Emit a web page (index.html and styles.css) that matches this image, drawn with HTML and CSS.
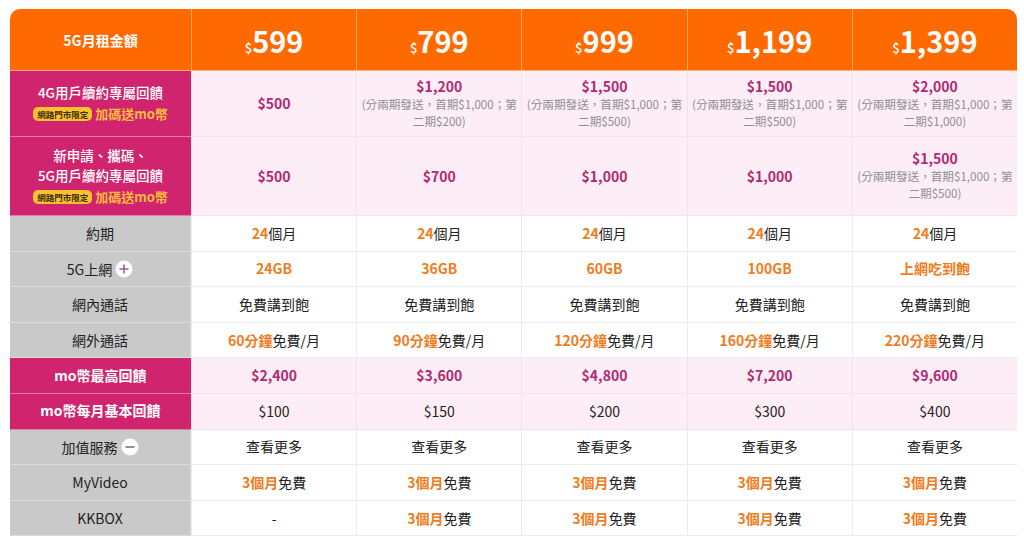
FILE: index.html
```html
<!DOCTYPE html>
<html lang="zh-Hant">
<head>
<meta charset="utf-8">
<link rel="stylesheet" href="styles.css">
</head>
<body>
<div class="table">
  <div class="row head">
    <div class="lab">5G月租金額</div>
    <div class="cell"><span class="cur">$</span>599</div>
    <div class="cell"><span class="cur">$</span>799</div>
    <div class="cell"><span class="cur">$</span>999</div>
    <div class="cell"><span class="cur">$</span>1,199</div>
    <div class="cell"><span class="cur">$</span>1,399</div>
  </div>
  <div class="row r1 pink">
    <div class="lab mag">
      <div>4G用戶續約專屬回饋</div>
      <div class="promo"><span class="badge">網路門市限定</span><span class="extra">加碼送mo幣</span></div>
    </div>
    <div class="cell"><b class="amt">$500</b></div>
    <div class="cell"><b class="amt">$1,200</b><span class="note">(分兩期發送，首期$1,000；第二期$200)</span></div>
    <div class="cell"><b class="amt">$1,500</b><span class="note">(分兩期發送，首期$1,000；第二期$500)</span></div>
    <div class="cell"><b class="amt">$1,500</b><span class="note">(分兩期發送，首期$1,000；第二期$500)</span></div>
    <div class="cell"><b class="amt">$2,000</b><span class="note">(分兩期發送，首期$1,000；第二期$1,000)</span></div>
  </div>
  <div class="row r2 pink">
    <div class="lab mag">
      <div>新申請、攜碼、</div>
      <div>5G用戶續約專屬回饋</div>
      <div class="promo"><span class="badge">網路門市限定</span><span class="extra">加碼送mo幣</span></div>
    </div>
    <div class="cell"><b class="amt">$500</b></div>
    <div class="cell"><b class="amt">$700</b></div>
    <div class="cell"><b class="amt">$1,000</b></div>
    <div class="cell"><b class="amt">$1,000</b></div>
    <div class="cell"><b class="amt">$1,500</b><span class="note">(分兩期發送，首期$1,000；第二期$500)</span></div>
  </div>
  <div class="row std">
    <div class="lab gray">約期</div>
    <div class="cell"><span><b class="or">24</b>個月</span></div>
    <div class="cell"><span><b class="or">24</b>個月</span></div>
    <div class="cell"><span><b class="or">24</b>個月</span></div>
    <div class="cell"><span><b class="or">24</b>個月</span></div>
    <div class="cell"><span><b class="or">24</b>個月</span></div>
  </div>
  <div class="row std">
    <div class="lab gray"><span class="inl">5G上網<span class="ico"><svg width="18" height="18" viewBox="0 0 18 18"><circle cx="9" cy="9" r="8.5" fill="#fff"/><path d="M9 4.5v9M4.5 9h9" stroke="#b0559a" stroke-width="1.6"/></svg></span></span></div>
    <div class="cell"><b class="or">24GB</b></div>
    <div class="cell"><b class="or">36GB</b></div>
    <div class="cell"><b class="or">60GB</b></div>
    <div class="cell"><b class="or">100GB</b></div>
    <div class="cell"><b class="or">上網吃到飽</b></div>
  </div>
  <div class="row std">
    <div class="lab gray">網內通話</div>
    <div class="cell">免費講到飽</div>
    <div class="cell">免費講到飽</div>
    <div class="cell">免費講到飽</div>
    <div class="cell">免費講到飽</div>
    <div class="cell">免費講到飽</div>
  </div>
  <div class="row std">
    <div class="lab gray">網外通話</div>
    <div class="cell"><span><b class="or">60分鐘</b>免費/月</span></div>
    <div class="cell"><span><b class="or">90分鐘</b>免費/月</span></div>
    <div class="cell"><span><b class="or">120分鐘</b>免費/月</span></div>
    <div class="cell"><span><b class="or">160分鐘</b>免費/月</span></div>
    <div class="cell"><span><b class="or">220分鐘</b>免費/月</span></div>
  </div>
  <div class="row std pink">
    <div class="lab mag">mo幣最高回饋</div>
    <div class="cell"><b class="amt">$2,400</b></div>
    <div class="cell"><b class="amt">$3,600</b></div>
    <div class="cell"><b class="amt">$4,800</b></div>
    <div class="cell"><b class="amt">$7,200</b></div>
    <div class="cell"><b class="amt">$9,600</b></div>
  </div>
  <div class="row std pink">
    <div class="lab mag">mo幣每月基本回饋</div>
    <div class="cell">$100</div>
    <div class="cell">$150</div>
    <div class="cell">$200</div>
    <div class="cell">$300</div>
    <div class="cell">$400</div>
  </div>
  <div class="row std">
    <div class="lab gray"><span class="inl">加值服務<span class="ico"><svg width="18" height="18" viewBox="0 0 18 18"><circle cx="9" cy="9" r="8.5" fill="#fff"/><path d="M4.5 9h9" stroke="#8a8a8a" stroke-width="1.8"/></svg></span></span></div>
    <div class="cell">查看更多</div>
    <div class="cell">查看更多</div>
    <div class="cell">查看更多</div>
    <div class="cell">查看更多</div>
    <div class="cell">查看更多</div>
  </div>
  <div class="row std">
    <div class="lab gray">MyVideo</div>
    <div class="cell"><span><b class="or">3個月</b>免費</span></div>
    <div class="cell"><span><b class="or">3個月</b>免費</span></div>
    <div class="cell"><span><b class="or">3個月</b>免費</span></div>
    <div class="cell"><span><b class="or">3個月</b>免費</span></div>
    <div class="cell"><span><b class="or">3個月</b>免費</span></div>
  </div>
  <div class="row std">
    <div class="lab gray">KKBOX</div>
    <div class="cell">-</div>
    <div class="cell"><span><b class="or">3個月</b>免費</span></div>
    <div class="cell"><span><b class="or">3個月</b>免費</span></div>
    <div class="cell"><span><b class="or">3個月</b>免費</span></div>
    <div class="cell"><span><b class="or">3個月</b>免費</span></div>
  </div>
</div>
</body>
</html>
```
FILE: styles.css
```css
html, body {
  margin: 0;
  background: #fff;
}
body {
  padding: 9px 7px 0 10px;
  font-family: "Noto Sans CJK TC", "Noto Sans", sans-serif;
  color: #222;
  font-size: 14px;
}
.table {
  width: 1007px;
  border-radius: 10px 10px 0 0;
  overflow: hidden;
}
.row {
  display: grid;
  grid-template-columns: 181px repeat(5, 1fr);
}
.row > div {
  display: flex;
  flex-direction: column;
  align-items: center;
  justify-content: center;
  text-align: center;
  box-sizing: border-box;
}
.cell {
  border-left: 1px solid #ececec;
  border-bottom: 1px solid #ececec;
  line-height: 1.35;
}
.head {
  height: 62px;
  background: #ff6a00;
  color: #fff;
}
.head .lab {
  font-weight: 700;
  font-size: 14px;
  border-bottom: 1px solid #ffb27a;
}
.head .cell {
  flex-direction: row;
  align-items: baseline;
  justify-content: center;
  font-size: 29px;
  font-weight: 700;
  border-left: 1px solid #ffa466;
  border-bottom: 1px solid #ffb27a;
  padding-top: 17px;
  line-height: 1;
}
.head .cur {
  font-size: 13px;
  font-weight: 500;
  margin-right: 0;
}
.r1 { height: 66px; }
.r2 { height: 79px; }
.std { height: 35.6px; }
.pink .cell { background: #fcedf6; border-color: #f1e3ec; }
.lab.mag {
  background: #d0246f;
  color: #fff;
  border-bottom: 1px solid #e27aa6;
  line-height: 1.55;
}
.lab.gray {
  background: #c9c9c9;
  color: #222;
  border-bottom: 1px solid #dcdcdc;
  border-right: 1px solid #d8d8d8;
}
.std .lab.mag { font-weight: 700; }
.r1 .lab, .r2 .lab { font-weight: 500; font-size: 13.5px; }
.promo {
  display: flex;
  align-items: center;
  gap: 3px;
  margin-top: 1px;
}
.badge {
  background: #fcc22c;
  color: #3a2a10;
  font-size: 8.5px;
  font-weight: 700;
  padding: 0 4px;
  border-radius: 5px;
  line-height: 14px;
  height: 14px;
}
.extra {
  color: #ffbb3a;
  font-weight: 700;
  font-size: 13px;
}
.amt {
  color: #b02a73;
  font-weight: 700;
  font-size: 14px;
}
.note {
  color: #8f8f8f;
  font-size: 11.6px;
  line-height: 1.5;
  padding: 0;
}
.or {
  color: #f07c1e;
  font-weight: 700;
}
.inl {
  display: inline-flex;
  align-items: center;
  gap: 3px;
}
.ico {
  display: inline-flex;
  width: 18px;
  height: 18px;
}
```
